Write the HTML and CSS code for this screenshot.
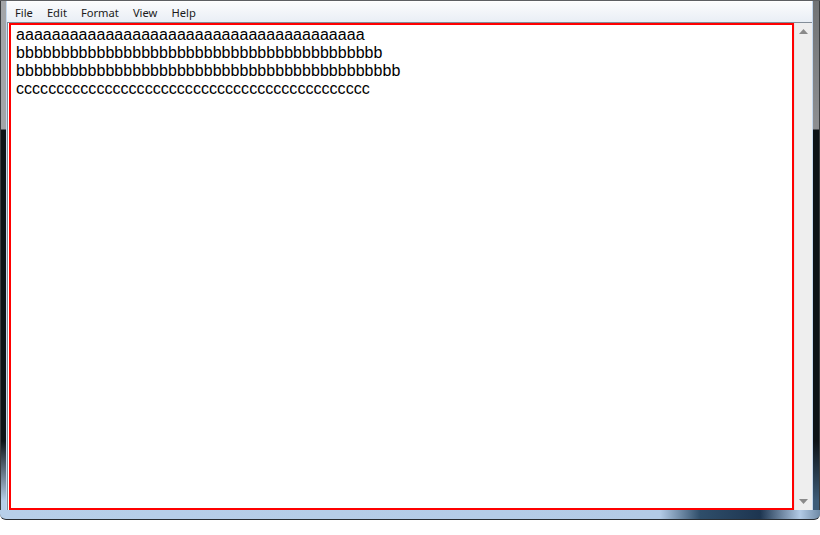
FILE: index.html
```html
<!DOCTYPE html>
<html>
<head>
<meta charset="utf-8">
<link rel="stylesheet" href="styles.css">
</head>
<body>
<div class="window">
  <div class="frame-top"></div>
  <div class="middle">
    <div class="frame-left"></div>
    <div class="client">
      <div class="menubar">
        <span class="menu-item">File</span>
        <span class="menu-item">Edit</span>
        <span class="menu-item">Format</span>
        <span class="menu-item">View</span>
        <span class="menu-item">Help</span>
      </div>
      <div class="body-row">
        <div class="editor">
          <div class="line">aaaaaaaaaaaaaaaaaaaaaaaaaaaaaaaaaaaaaaa</div>
          <div class="line">bbbbbbbbbbbbbbbbbbbbbbbbbbbbbbbbbbbbbbbbb</div>
          <div class="line">bbbbbbbbbbbbbbbbbbbbbbbbbbbbbbbbbbbbbbbbbbb</div>
          <div class="line">cccccccccccccccccccccccccccccccccccccccccccc</div>
        </div>
        <div class="scrollbar">
          <div class="arrow">
            <svg width="9" height="5" viewBox="0 0 9 5"><path d="M4.5 0 L9 5 L0 5 Z" fill="#8a8a8a"/></svg>
          </div>
          <div class="track"></div>
          <div class="arrow">
            <svg width="9" height="5" viewBox="0 0 9 5"><path d="M0 0 L9 0 L4.5 5 Z" fill="#8a8a8a"/></svg>
          </div>
        </div>
      </div>
    </div>
    <div class="frame-right"></div>
  </div>
  <div class="frame-bottom"></div>
</div>
</body>
</html>
```
FILE: styles.css
```css
html, body {
  margin: 0;
  padding: 0;
  background: #ffffff;
}

.window {
  width: 820px;
  height: 520px;
  display: flex;
  flex-direction: column;
  overflow: hidden;
}

.frame-top {
  height: 1px;
  background: #5d5f62;
}

.middle {
  flex: 1;
  display: flex;
  min-height: 0;
}

.frame-left {
  width: 6px;
  border-left: 1px solid #3a3c3e;
  box-sizing: border-box;
  background: linear-gradient(to bottom, #a3a5a8 0, #a3a5a8 128px, #0c1217 129px, #0c1217 440px, #b7cfe9 500px);
}

.frame-right {
  width: 7px;
  border-right: 1px solid #3a3c3e;
  box-sizing: border-box;
  background: linear-gradient(to bottom, #717375 0, #8d8f92 128px, #0c1217 129px, #0c1217 440px, #3d5c78 500px);
}

.client {
  flex: 1;
  display: flex;
  flex-direction: column;
  min-width: 0;
  border-left: 1px solid #c4d8ee;
  border-right: 1px solid #c4d8ee;
}

.menubar {
  height: 21px;
  display: flex;
  align-items: center;
  padding-left: 1px;
  padding-top: 1px;
  box-sizing: border-box;
  background: linear-gradient(to bottom, #fbfcfd 0%, #e9eef5 100%);
  border-top: 1px solid #ffffff;
  font-family: "Noto Sans", "Open Sans", sans-serif;
  font-size: 11.2px;
  color: #1a1a1a;
}

.menu-item {
  padding: 0 7px;
}

.body-row {
  flex: 1;
  display: flex;
  min-height: 0;
  padding-left: 1px;
  background: #ffffff;
  border-left: 1px solid #838d98;
  border-top: 1px solid #838d98;
}

.editor {
  flex: 1;
  border: 2px solid #ff0000;
  background: #ffffff;
  padding: 1px 5px 0;
  font-family: "Liberation Sans", Arial, sans-serif;
  font-size: 16px;
  line-height: 18px;
  letter-spacing: 0.04px;
  color: #000000;
  overflow: hidden;
}

.line {
  white-space: nowrap;
}

.scrollbar {
  width: 17px;
  display: flex;
  flex-direction: column;
  background: #eeeeee;
  border-left: 1px solid #e4e4e4;
}

.arrow {
  height: 17px;
  display: flex;
  align-items: center;
  justify-content: center;
}

.track {
  flex: 1;
}

.frame-bottom {
  height: 9px;
  background: linear-gradient(to right, #b7cfe9 0, #b3cbe6 660px, #2f4e6a 700px, #1d3550 760px, #b3cbe6 800px, #6e8aa6 820px);
  border-bottom: 1px solid #2a2d31;
  border-radius: 0 0 6px 6px;
}
```
